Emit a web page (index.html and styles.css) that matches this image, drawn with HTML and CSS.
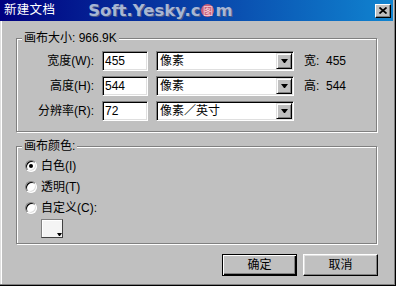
FILE: index.html
```html
<!DOCTYPE html>
<html>
<head>
<meta charset="UTF-8">
<title>新建文档</title>
<link rel="stylesheet" href="styles.css">
</head>
<body>
<div class="window">
  <div class="titlebar">
    <span class="title">新建文档</span>
    <span class="watermark">Soft.Yesky.c<span class="wm-badge">图</span>m</span>
    <span class="close">
      <svg width="8" height="7" viewBox="0 0 8 7"><path d="M0.5 0.5 L7.5 6.5 M7.5 0.5 L0.5 6.5" stroke="#000" stroke-width="1.7" fill="none"/></svg>
    </span>
  </div>

  <div class="client">
    <fieldset class="group size-group">
      <legend>画布大小: 966.9K</legend>
      <div class="size-grid">
        <label>宽度(W):</label>
        <div class="field">455</div>
        <div class="combo"><span class="combo-text">像素</span><span class="drop"><i class="arrow"></i></span></div>
        <div class="info">宽:&nbsp; 455</div>

        <label>高度(H):</label>
        <div class="field">544</div>
        <div class="combo"><span class="combo-text">像素</span><span class="drop"><i class="arrow"></i></span></div>
        <div class="info">高:&nbsp; 544</div>

        <label>分辨率(R):</label>
        <div class="field">72</div>
        <div class="combo"><span class="combo-text">像素／英寸</span><span class="drop"><i class="arrow"></i></span></div>
        <div></div>
      </div>
    </fieldset>

    <fieldset class="group color-group">
      <legend>画布颜色:</legend>
      <div class="color-list">
        <div class="radio-row"><span class="radio checked"></span>白色(I)</div>
        <div class="radio-row"><span class="radio"></span>透明(T)</div>
        <div class="radio-row"><span class="radio"></span>自定义(C):</div>
        <div class="swatch"></div>
      </div>
    </fieldset>

    <div class="actions">
      <button class="btn default">确定</button>
      <button class="btn">取消</button>
    </div>
  </div>
</div>
</body>
</html>
```

FILE: styles.css
```css
body {
  margin: 0;
  font: 12px/15px "Liberation Sans", "Noto Sans CJK SC", sans-serif;
  color: #000;
  background: #c0c0c0;
}

.window {
  width: 396px;
  height: 286px;
  box-sizing: border-box;
  background: #c0c0c0;
  display: flex;
  flex-direction: column;
  box-shadow: inset -1px -1px #000, inset -2px -2px #808080,
              inset 1px 0 #dfdfdf, inset 2px 0 #fff;
}

/* title bar */
.titlebar {
  height: 21px;
  flex: none;
  margin-right: 3px;
  padding-left: 4px;
  display: flex;
  align-items: center;
  background: linear-gradient(to right, #000080, #1084d0);
  color: #fff;
}

.title {
  font-size: 12.5px;
  letter-spacing: 0.3px;
}

.watermark {
  margin-left: 33px;
  display: flex;
  align-items: center;
  font: bold 16.5px/21px "DejaVu Sans", sans-serif;
  color: #a8b6d4;
  text-shadow: 1px 1px 0 #4a5a88;
}

.wm-badge {
  width: 13px;
  height: 13px;
  margin: 0 1px;
  border-radius: 50%;
  background: #c8607a;
  color: #f4d0dc;
  font: 10px/13px "Noto Sans CJK SC", sans-serif;
  text-align: center;
  text-shadow: none;
}

.close {
  margin-left: auto;
  margin-right: 2px;
  width: 16px;
  height: 14px;
  box-sizing: border-box;
  background: #c0c0c0;
  border: 1px solid;
  border-color: #fff #000 #000 #fff;
  box-shadow: inset -1px -1px #808080;
  display: flex;
  align-items: center;
  justify-content: center;
}

/* client area */
.client {
  flex: 1;
  padding: 0 19px 0 16px;
  display: flex;
  flex-direction: column;
}

.group {
  margin: 10px 0 0;
  border: 1px solid #808080;
  box-shadow: inset 1px 1px #fff, 1px 1px #fff;
  min-width: 0;
}

.group legend {
  margin-left: 5px;
  padding: 0 2px;
  line-height: 15px;
  background: #c0c0c0;
}

.size-group {
  padding: 5px 0 10px;
}

.color-group {
  margin-top: 7px;
  padding: 2px 0 5px;
}

.size-grid {
  display: grid;
  grid-template-columns: 77px 46px 138px 1fr;
  grid-auto-rows: 20px;
  row-gap: 5px;
  column-gap: 8px;
  align-items: center;
}

.size-grid label {
  text-align: right;
}

.field, .combo {
  height: 20px;
  box-sizing: border-box;
  background: #fff;
  border: 1px solid;
  border-color: #808080 #fff #fff #808080;
  box-shadow: inset 1px 1px #000, inset -1px -1px #dfdfdf;
}

.field {
  padding: 0 2px;
  line-height: 18px;
}

.combo {
  display: flex;
  padding: 1px;
}

.combo-text {
  flex: 1;
  padding-left: 2px;
  line-height: 16px;
}

.drop {
  width: 16px;
  box-sizing: border-box;
  background: #c0c0c0;
  border: 1px solid;
  border-color: #dfdfdf #000 #000 #dfdfdf;
  box-shadow: inset 1px 1px #fff, inset -1px -1px #808080;
  display: flex;
  align-items: center;
  justify-content: center;
}

.arrow {
  width: 1px;
  border-top: 4px solid #000;
  border-left: 3px solid transparent;
  border-right: 3px solid transparent;
}

.info {
  padding-left: 2px;
}

/* colour options */
.color-list {
  display: flex;
  flex-direction: column;
  gap: 1px;
}

.radio-row {
  height: 20px;
  padding-left: 8px;
  display: flex;
  align-items: center;
  gap: 4px;
}

.radio {
  width: 12px;
  height: 12px;
  box-sizing: border-box;
  border-radius: 50%;
  background: #fff;
  border: 1px solid;
  border-color: #808080 #fff #fff #808080;
  box-shadow: inset 1px 1px #000, inset -1px -1px #dfdfdf;
  display: flex;
  align-items: center;
  justify-content: center;
}

.radio.checked::after {
  content: "";
  width: 4px;
  height: 4px;
  border-radius: 50%;
  background: #000;
}

.swatch {
  position: relative;
  align-self: flex-start;
  width: 22px;
  height: 19px;
  margin-left: 24px;
  box-sizing: border-box;
  background: #f4f4f4;
  border: 1px solid;
  border-color: #808080 #404040 #404040 #808080;
  box-shadow: inset 1px 1px #fff;
}

.swatch::after {
  content: "";
  position: absolute;
  right: 0;
  bottom: 1px;
  width: 1px;
  border-top: 3px solid #000;
  border-left: 2px solid transparent;
  border-right: 2px solid transparent;
}

/* buttons */
.actions {
  margin: 10px -1px 0 0;
  display: flex;
  justify-content: flex-end;
  gap: 6px;
}

.btn {
  width: 75px;
  height: 22px;
  padding: 0;
  font: inherit;
  color: #000;
  background: #c0c0c0;
  border: 1px solid;
  border-color: #fff #000 #000 #fff;
  box-shadow: inset -1px -1px #808080, inset 1px 1px #dfdfdf;
}

.btn.default {
  border-color: #000;
  box-shadow: inset 1px 1px #fff, inset -1px -1px #000, inset -2px -2px #808080;
}
```
